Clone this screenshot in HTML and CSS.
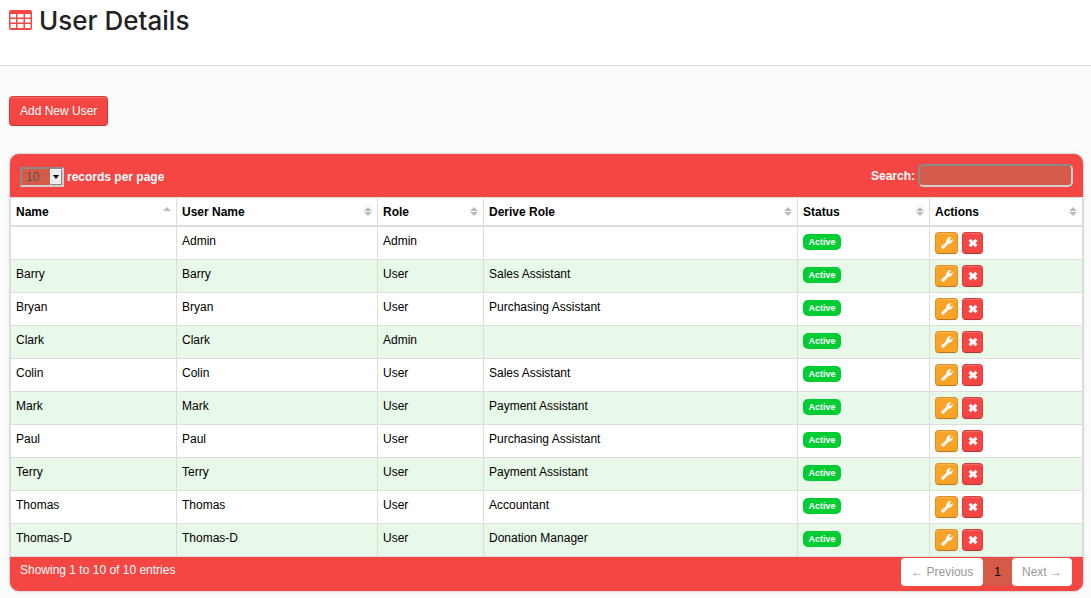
FILE: index.html
```html
<!DOCTYPE html>
<html lang="en">
<head>
<meta charset="utf-8">
<title>User Details</title>
<link rel="stylesheet" href="styles.css">
</head>
<body>
<svg class="sprite" aria-hidden="true">
  <symbol id="wrench" viewBox="0 0 12 12"><path d="M.6 9.200 5.300 4.900C4.900 2.300 6.600.2 9.300.2L10.500.5 8.400 2.500 8.700 3.500 9.700 3.700 11.700 1.900C12.300 4.500 10.100 6.900 7.400 6.700L3.200 11.200C1.800 12.600-.8 10.600.6 9.200Z"/></symbol>
  <symbol id="cross" viewBox="0 0 10 10"><path d="M2.700.8 5 3.100 7.300.8 9.500 2.900 7.300 5 9.500 7.100 7.300 9.200 5 6.900 2.700 9.200.5 7.100 2.700 5 .5 2.900Z"/></symbol>
  <symbol id="sort" viewBox="0 0 8 9"><path d="M0 4 4 0 8 4ZM0 5H8L4 9Z"/></symbol>
  <symbol id="sort-up" viewBox="0 0 8 9"><path d="M0 4 4 0 8 4Z"/></symbol>
</svg>
<header class="page-head">
  <svg class="title-icon" viewBox="0 0 23 20" aria-hidden="true"><path fill-rule="evenodd" d="M2 0H21Q23 0 23 2V18Q23 20 21 20H2Q0 20 0 18V2Q0 0 2 0ZM1.500 4V7.500H7V4ZM8.500 4V7.500H14.500V4ZM16 4V7.500H21.500V4ZM1.500 9V12.500H7V9ZM8.500 9V12.500H14.500V9ZM16 9V12.500H21.500V9ZM1.500 14V18H7V14ZM8.500 14V18H14.500V14ZM16 14V18H21.500V14Z"/></svg>
  <h1>User Details</h1>
</header>
<main class="content">
  <button class="btn btn-add" type="button">Add New User</button>
  <section class="panel">
    <div class="toolbar">
      <div class="length">
        <span class="select-wrap"><select id="length"><option>10</option><option>25</option><option>50</option></select><span class="select-arrow"></span></span>
        <label for="length">records per page</label>
      </div>
      <div class="search"><label for="search">Search:</label><input id="search" type="text"></div>
    </div>
    <table class="users">
      <colgroup><col class="c-name"><col class="c-user"><col class="c-role"><col class="c-derive"><col class="c-status"><col class="c-actions"></colgroup>
      <thead><tr id="head"></tr></thead>
      <tbody id="rows"></tbody>
    </table>
    <div class="footer">
      <div class="info">Showing 1 to 10 of 10 entries</div>
      <nav class="pager"><button class="page" type="button" disabled>← Previous</button><button class="page current" type="button">1</button><button class="page" type="button" disabled>Next →</button></nav>
    </div>
  </section>
</main>
<script src="users.js"></script>
</body>
</html>
```
FILE: users.js
```js
const columns = ["Name", "User Name", "Role", "Derive Role", "Status", "Actions"];
const users = [
  ["", "Admin", "Admin", ""],
  ["Barry", "Barry", "User", "Sales Assistant"],
  ["Bryan", "Bryan", "User", "Purchasing Assistant"],
  ["Clark", "Clark", "Admin", ""],
  ["Colin", "Colin", "User", "Sales Assistant"],
  ["Mark", "Mark", "User", "Payment Assistant"],
  ["Paul", "Paul", "User", "Purchasing Assistant"],
  ["Terry", "Terry", "User", "Payment Assistant"],
  ["Thomas", "Thomas", "User", "Accountant"],
  ["Thomas-D", "Thomas-D", "User", "Donation Manager"]
];
document.getElementById("head").innerHTML = columns.map((name, i) =>
  `<th scope="col"><div class="th">${name}<svg class="sort"><use href="#${i ? "sort" : "sort-up"}"/></svg></div></th>`).join("");
document.getElementById("rows").innerHTML = users.map(user =>
  `<tr>${user.map(text => `<td>${text}</td>`).join("")}
  <td><span class="badge">Active</span></td>
  <td><div class="actions"><button class="btn btn-edit" type="button" aria-label="Edit"><svg><use href="#wrench"/></svg></button><button class="btn btn-delete" type="button" aria-label="Delete"><svg><use href="#cross"/></svg></button></div></td></tr>`).join("");
```
FILE: styles.css
```css
* { box-sizing: border-box; }
body {
  margin: 0;
  background: #fbfbfb;
  color: #000;
  font: 12px/20px "Liberation Sans", Arial, sans-serif;
}
button, input, select { font: inherit; }
.sprite { position: absolute; width: 0; height: 0; }
.page-head {
  display: flex;
  align-items: flex-start;
  gap: 7px;
  padding: 6px 9px 29px;
  background: #fff;
  border-bottom: 1px solid #ddd;
}
.title-icon { width: 23px; height: 20px; margin-top: 4px; fill: #f44643; }
h1 {
  margin: 0;
  color: #222;
  font: 500 26px/30px Inter, sans-serif;
}
.content { padding: 30px 7px 7px 9px; }
.btn {
  display: inline-flex;
  align-items: center;
  justify-content: center;
  padding: 0;
  border: 1px solid #d63e3b;
  border-bottom-color: #b93431;
  border-radius: 4px;
  background: #f44643;
  color: #fff;
  box-shadow: inset 0 1px 0 rgba(255, 255, 255, .2), 0 1px 2px rgba(0, 0, 0, .05);
}
.btn-add { height: 30px; padding: 0 10px; }
.panel {
  margin-top: 27px;
  border: 1px solid #ddd;
  border-radius: 10px;
  overflow: hidden;
  background: #f44643;
  box-shadow: 0 0 4px rgba(0, 0, 0, .06);
}
.toolbar {
  display: flex;
  align-items: center;
  justify-content: space-between;
  padding: 10px;
  color: #fff;
  font-weight: bold;
}
.length, .search { display: flex; align-items: center; gap: 3px; }
.length { padding-top: 2px; }
.select-wrap { position: relative; display: flex; }
select {
  width: 44px;
  height: 20px;
  padding: 0 4px;
  appearance: none;
  border: 2px solid;
  border-color: #8a8a8a #d0d0d0 #d0d0d0 #8a8a8a;
  border-radius: 0;
  background: #d65a48;
  color: #555;
  font-weight: normal;
  line-height: 16px;
}
.select-arrow {
  position: absolute;
  top: 2px;
  right: 2px;
  bottom: 2px;
  display: flex;
  align-items: center;
  justify-content: center;
  width: 12px;
  border: 1px solid;
  border-color: #fff #888 #888 #fff;
  background: #ececec;
  pointer-events: none;
}
.select-arrow::after {
  content: "";
  border: 3px solid transparent;
  border-top: 4px solid #000;
  border-bottom: 0;
}
.search input {
  width: 155px;
  height: 23px;
  padding: 0 5px;
  border: 2px solid;
  border-color: #8a8a8a #d0d0d0 #d0d0d0 #8a8a8a;
  border-radius: 5px;
  background: #d65a48;
}
.users {
  width: 100%;
  table-layout: fixed;
  border-spacing: 0;
  border-right: 1px solid #ddd;
  background: #fff;
}
.c-name { width: 166px; }
.c-user { width: 201px; }
.c-role { width: 106px; }
.c-derive { width: 314px; }
.c-status { width: 132px; }
.c-actions { width: 153px; }
th, td {
  height: 33px;
  padding: 4px 5px;
  border-top: 1px solid #ddd;
  border-left: 1px solid #ddd;
  text-align: left;
  vertical-align: top;
}
th { height: 28px; padding-bottom: 3px; }
.th { display: flex; align-items: center; justify-content: space-between; }
.sort { width: 8px; height: 9px; margin-bottom: 2px; fill: #bbb; }
tbody tr:first-child td { height: 34px; border-top-width: 2px; }
tbody tr:last-child td { height: 34px; border-bottom: 1px solid #ddd; }
tbody tr:nth-child(even) td { background: #e8f8e9; }
.badge {
  display: block;
  width: 38px;
  margin-top: 3px;
  border-radius: 5px;
  background: #00cd33;
  color: #fff;
  font: bold 9px/16px "Liberation Sans", Arial, sans-serif;
  text-align: center;
}
td:last-child { padding-top: 5px; }
.actions { display: flex; gap: 4px; }
.actions .btn { height: 22px; }
.actions svg { width: 12px; height: 12px; fill: #fff; }
.actions .btn-edit { width: 23px; border-color: #dc9023 #dc9023 #b9771a; background: #f9a328; }
.actions .btn-delete { width: 21px; }
.actions .btn-delete svg { width: 10px; height: 10px; }
.footer {
  display: flex;
  align-items: flex-start;
  justify-content: space-between;
  padding: 1px 10px 5px;
  color: #fff;
}
.info { padding-top: 2px; }
.pager { display: flex; padding-right: 1px; }
.page {
  height: 28px;
  padding: 0 10px;
  border: 0;
  border-radius: 4px;
  background: #fff;
  color: #999;
}
.page.current { padding: 0 11px; background: #d65a48; color: #000; }
```
